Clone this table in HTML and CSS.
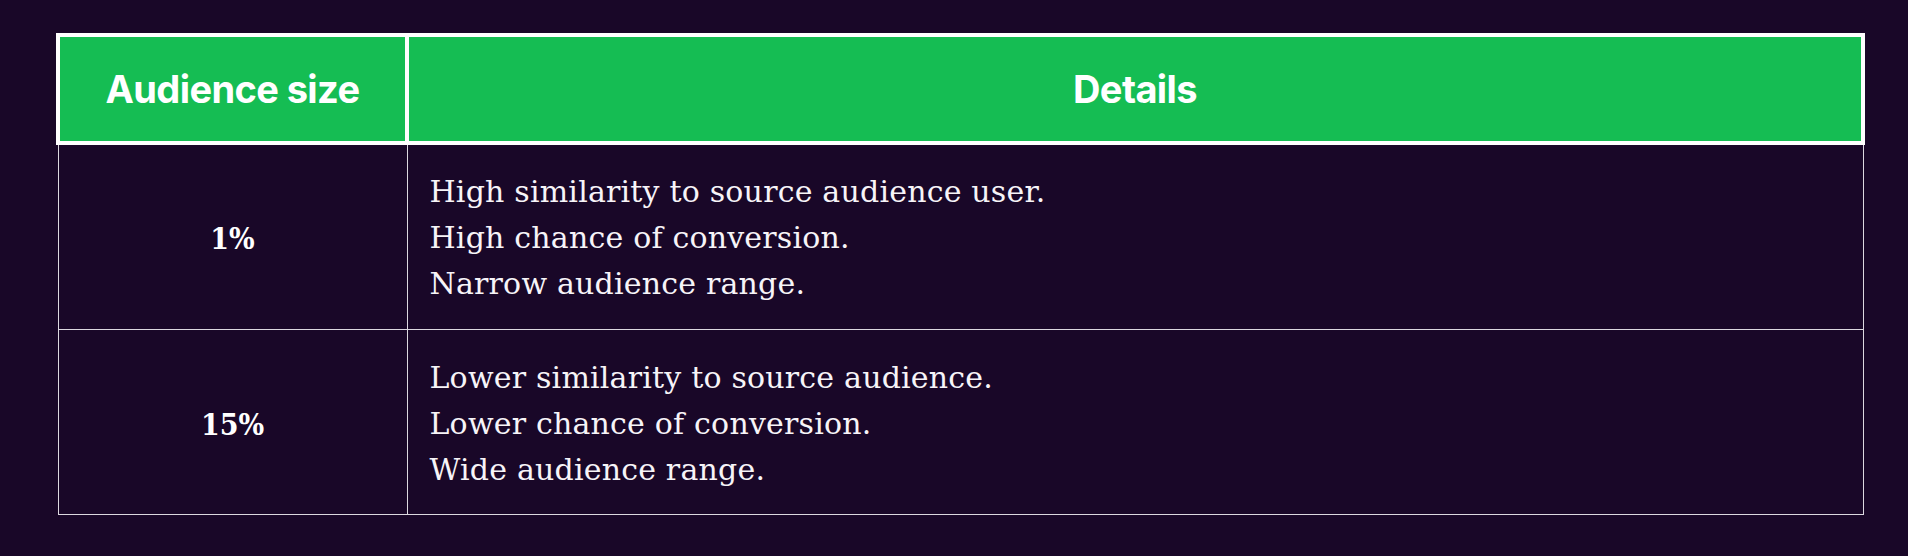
FILE: index.html
```html
<!DOCTYPE html>
<html lang="en">
<head>
<meta charset="utf-8">
<title>Audience size</title>
<link rel="stylesheet" href="styles.css">
</head>
<body>
<div class="page">
  <table class="audience-table">
    <thead>
      <tr>
        <th class="col-size">Audience size</th>
        <th class="col-details">Details</th>
      </tr>
    </thead>
    <tbody>
      <tr class="row-first">
        <td class="size">1%</td>
        <td class="details">
          <p>High similarity to source audience user.</p>
          <p>High chance of conversion.</p>
          <p>Narrow audience range.</p>
        </td>
      </tr>
      <tr>
        <td class="size">15%</td>
        <td class="details">
          <p>Lower similarity to source audience.</p>
          <p>Lower chance of conversion.</p>
          <p>Wide audience range.</p>
        </td>
      </tr>
    </tbody>
  </table>
</div>
</body>
</html>
```

FILE: styles.css
```css
html, body {
  margin: 0;
  padding: 0;
  background: #190728;
}

.page {
  padding: 33px 43px 40px 56px;
}

.audience-table {
  width: 100%;
  border-collapse: collapse;
  color: #ffffff;
}

.audience-table th {
  background: #15bd53;
  border: 4px solid #ffffff;
  height: 104px;
  padding: 0;
  font-family: Inter, "Liberation Sans", sans-serif;
  font-weight: 700;
  font-size: 38px;
  letter-spacing: -0.6px;
  text-align: center;
  vertical-align: middle;
}

.audience-table .col-size {
  width: 345px;
}

.audience-table td {
  border: 1px solid #dcd8e0;
  padding: 25px 22px 21px;
  vertical-align: middle;
}

.audience-table .row-first td {
  padding-top: 24px;
  padding-bottom: 22px;
}

.audience-table td.size {
  text-align: center;
  font-family: "DejaVu Serif Condensed", "DejaVu Serif", serif;
  font-weight: 700;
  font-size: 30px;
}

.audience-table td.details {
  font-family: "DejaVu Serif", serif;
  font-size: 30px;
  line-height: 46px;
  letter-spacing: 0.2px;
  color: #f7f4f8;
}

.details p {
  margin: 0;
}
```
